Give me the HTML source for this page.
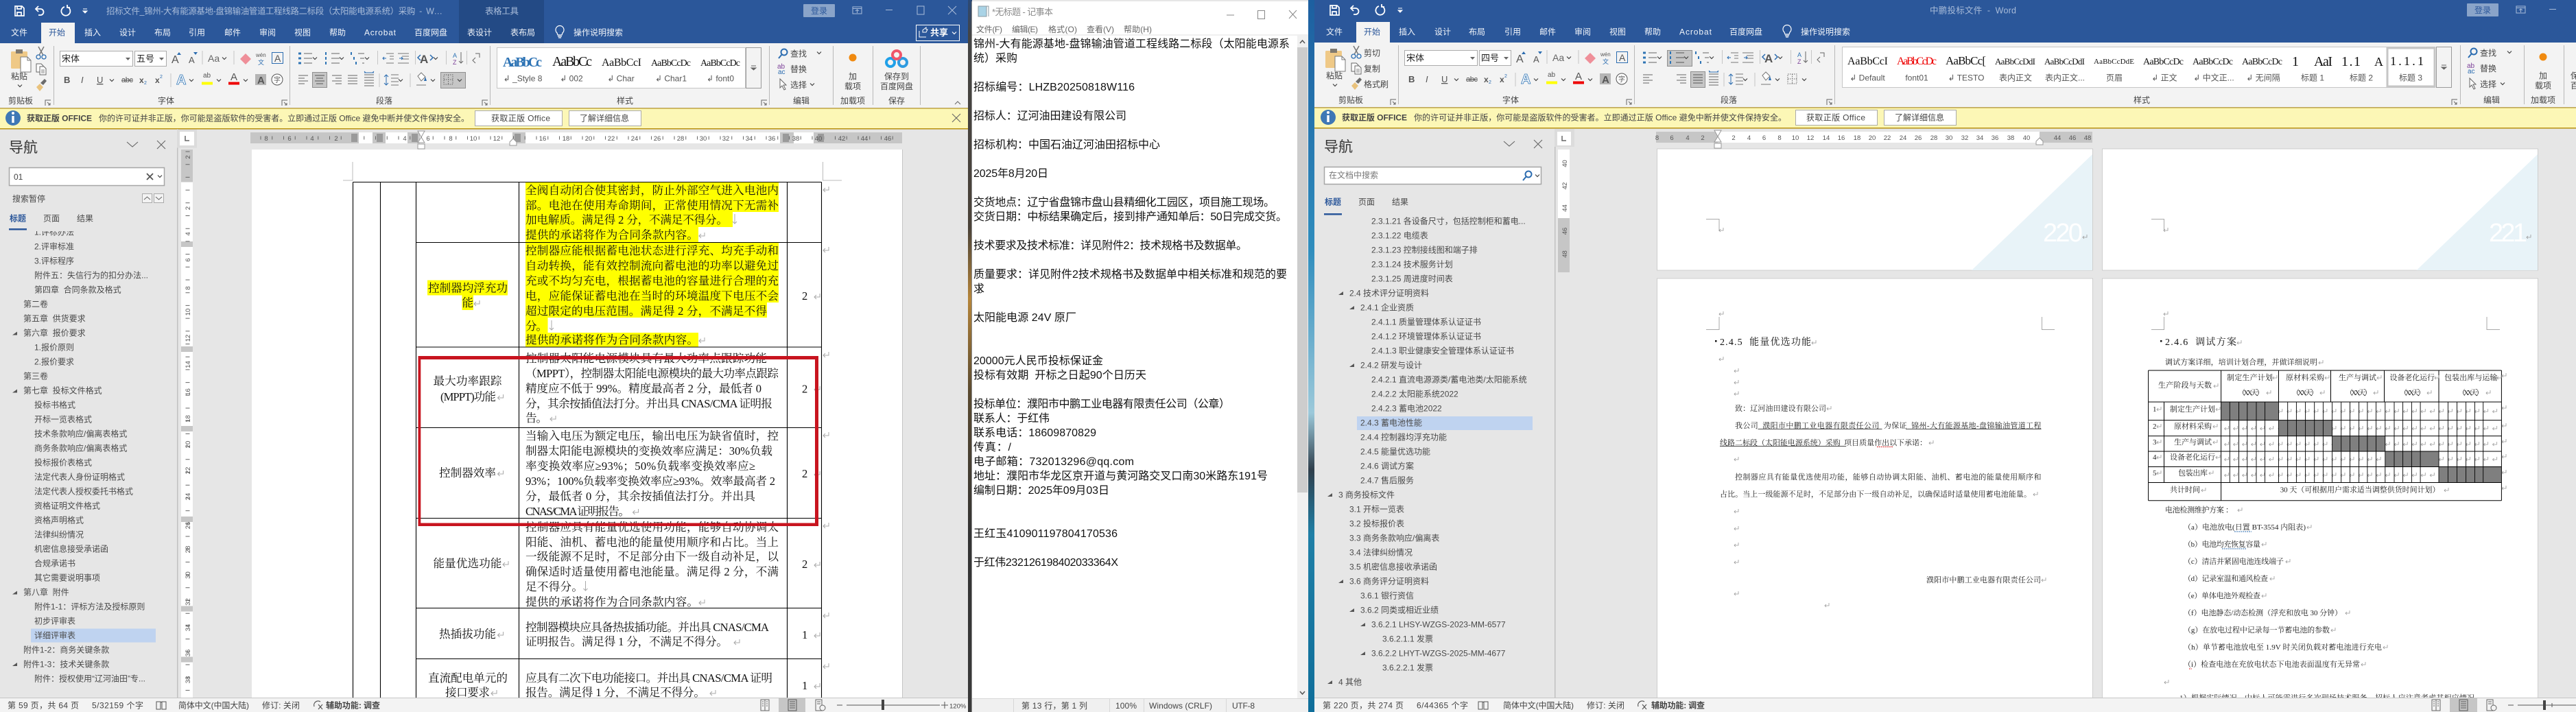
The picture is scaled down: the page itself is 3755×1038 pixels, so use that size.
<!DOCTYPE html>
<html><head><meta charset="utf-8"><title>Word</title>
<style>
html,body{margin:0;padding:0;width:3755px;height:1038px;overflow:hidden;background:#e6e6e6}
svg{display:block;font-family:"Liberation Sans","Noto Sans CJK SC",sans-serif}
text{white-space:pre}
.r{font-size:12px;fill:#444}
.g{font-size:12px;fill:#444}
.w{font-size:12px;fill:#f2f5fa}
.a{font-size:12px;fill:#2b579a}
.ti{font-size:12.5px;fill:#a9bcd9}
.n{font-size:12px;fill:#4a4a4a}
.st{font-size:12px;fill:#444}
.np{font-size:16px;fill:#111}
.s{font-family:"Liberation Serif","Noto Serif CJK SC",serif;font-size:16.6px;fill:#111}
.d{font-family:"Liberation Serif","Noto Serif CJK SC",serif;font-size:11px;fill:#222}
.h{font-family:"Liberation Serif","Noto Serif CJK SC",serif;font-size:14px;fill:#111}
.rl{font-size:9.5px;fill:#555;text-anchor:middle}
.sm{font-family:"Liberation Serif",serif;fill:#111}
.lb{font-size:12px;fill:#555;text-anchor:middle}
</style></head>
<body>
<svg xmlns="http://www.w3.org/2000/svg" width="3755" height="1038" viewBox="0 0 3755 1038">
<defs>
<linearGradient id="wl" x1="0" y1="0" x2="0" y2="1"><stop offset="0" stop-color="#2b4a78"/><stop offset=".05" stop-color="#444"/><stop offset=".32" stop-color="#4a4238"/><stop offset=".42" stop-color="#b5853a"/><stop offset=".55" stop-color="#5a4a30"/><stop offset=".75" stop-color="#333"/><stop offset="1" stop-color="#3a3a3a"/></linearGradient>
<linearGradient id="wr" x1="0" y1="0" x2="0" y2="1"><stop offset="0" stop-color="#1d5fa0"/><stop offset=".35" stop-color="#2f8dbd"/><stop offset=".58" stop-color="#9cc9da"/><stop offset=".66" stop-color="#2f3f4c"/><stop offset=".75" stop-color="#1f7fa6"/><stop offset="1" stop-color="#0f6e9a"/></linearGradient>
<g id="sv" fill="none" stroke="#fff" stroke-width="1.7"><path d="M-6-7H4l3 3V7H-6zM-3-7v4h6v-4M-3 7V2h6v5"/></g>
<g id="un" fill="none" stroke="#fff" stroke-width="1.8"><path d="M-4-3H2a4 4 0 0 1 0 9H-1M-1-7-5-3-1 1"/></g>
<g id="re" fill="none" stroke="#fff" stroke-width="1.8"><path d="M-2-6a6.5 6.5 0 1 0 5 .5M2-9v4h4"/></g>
<g id="qa" fill="none" stroke="#fff"><path d="M-3-3H3"/><path d="M-3 0H3L0 3z" fill="#fff"/></g>
<path id="ch" d="M-3-1.5 0 1.5 3-1.5" fill="none" stroke="#444" stroke-width="1.2"/>
<path id="ln" d="M-4 4V-4H4M-1-1 3 3M3 0V3H0" fill="none" stroke="#666"/>
<g id="paste"><rect y="3" width="24" height="25" rx="1.5" fill="#efc987"/><rect x="7" width="10" height="6" fill="#807a70"/><path d="M14 11H24L29 16V33H14z" fill="#fff" stroke="#7a7a7a"/><path d="M24 11V16H29" fill="none" stroke="#7a7a7a"/></g>
<g id="sc" fill="none"><path d="M-3 3.5 4-9M3 3.5-4-9" stroke="#777" stroke-width="1.5"/><circle cx="-4" cy="6" r="3" stroke="#2b6cb0" stroke-width="1.3"/><circle cx="4" cy="6" r="3" stroke="#2b6cb0" stroke-width="1.3"/></g>
<g id="cp" fill="#fff" stroke="#666"><path d="M-7-7H0L3-4V5H-7z"/><path d="M-2-3H4L7 0V9H-2z"/><path d="M0 2H5M0 4H5M0 6H5" stroke-width=".8"/></g>
<g id="br"><path d="M-7 3-2-2 3 3-2 9z" fill="#e9c27c"/><path d="M-1-3 5-9 8-6 3 0z" fill="#6b6b6b"/></g>
<g id="find" fill="none" stroke="#2b6cb0" stroke-width="2"><circle cx="2" cy="-2" r="4.5"/><path d="M-1 1-6 7"/></g>
<path id="cur" d="M-4-8V5L-1 2 2 8 4 7 1 1H5z" fill="#fff" stroke="#666"/>
<g id="bd"><circle cx="-9" cy="5" r="6" fill="none" stroke="#20a0e8" stroke-width="4"/><circle cx="9" cy="5" r="6" fill="none" stroke="#2f9be0" stroke-width="4"/><circle cy="-6" r="6" fill="none" stroke="#f0556a" stroke-width="4"/></g>
<path id="bulb" d="M-4 3A6 6 0 1 1 4 3L3 6H-3zM-3 8H3M-2 10H2" fill="none" stroke="#fff" stroke-width="1.2"/>
<g id="xx" fill="none" stroke="#666" stroke-width="1.1"><path d="M-6-6 6 6M6-6-6 6"/></g>
<path id="vv" d="M-8-4 0 3 8-4" fill="none" stroke="#666" stroke-width="1.1"/>
<g id="inf"><circle r="11" fill="#3f78b5"/><rect x="-1.7" y="-3" width="3.4" height="10" fill="#fff"/><circle cy="-7" r="2" fill="#fff"/></g>
<path id="ar" d="M-3 3H4V-2z" fill="#555"/>
<path id="pm" d="M4-5V0H-4M-1-3-4 0-1 3" fill="none" stroke="#a8a8a8" stroke-width="1"/>
<path id="dn" d="M0-8V6M-3 3 0 6 3 3" fill="none" stroke="#a8a8a8" stroke-width="1"/>
<path id="ps" d="M3-3V1H-3M-1-1-3 1-1 3" fill="none" stroke="#999" stroke-width=".8"/>
<pattern id="pp" x="3237.6" y="0" width="13.03" height="20" patternUnits="userSpaceOnUse"><path d="M11 7V11H5M7 9 5 11 7 13" fill="none" stroke="#999" stroke-width=".8"/></pattern>
<g id="bk" fill="none" stroke="#555"><path d="M-7-5H-1V6H-7zM1-5H7V6H1zM-1-5 1-4"/></g>
<g id="v1" fill="none" stroke="#666"><path d="M-6-8H6V8H-6zM0-8V8M-4-5H-2M-4-2H-2M-4 1H-2M2-5H4M2-2H4M2 1H4"/></g>
<g id="v2" fill="none" stroke="#555"><path d="M-6-8H6V8H-6zM-4-5H4M-4-2H4M-4 1H4M-4 4H4"/></g>
<g id="v3" fill="none" stroke="#666"><path d="M-6-8H3V8H-6zM-4-5H1M-4-2H1"/><circle cx="4" cy="4" r="4" fill="#f3f3f3"/></g>
<g id="acc" fill="none" stroke="#555" stroke-width="1.2"><path d="M-6 2A6 6 0 0 1 3-5M0-1 6 6M6-1 0 6"/></g>
</defs>

<!-- ============ WORD 1 ============ -->
<rect width="1411" height="63" fill="#2b579a"/>
<rect x="669" width="124" height="63" fill="#234a85"/>
<use href="#sv" x="28" y="16"/><use href="#un" x="57" y="16"/><use href="#re" x="96" y="16"/><use href="#qa" x="124" y="16"/>
<text class="ti" x="155" y="20.5" textLength="490">招标文件_锦州-大有能源基地-盘锦输油管道工程线路二标段（太阳能电源系统）采购  -  W…</text>
<text class="ti" x="707" y="20.5" textLength="49">表格工具</text>
<rect x="1171" y="6" width="46" height="19" rx="1" fill="#8aa4c9"/><text x="1182" y="20" style="font-size:12px;fill:#2b579a">登录</text>
<path d="M1243 10H1256V20H1243zM1243 12.5H1256M1249.5 19V14M1247 16 1249.5 14 1252 16" fill="none" stroke="#a9bcd9"/>
<path d="M1291 14.5H1301" stroke="#a9bcd9"/><rect x="1337" y="9" width="10" height="12" fill="none" stroke="#a9bcd9"/><path d="M1382 9 1394 21M1394 9 1382 21" stroke="#a9bcd9"/>
<rect x="60" y="33" width="49" height="30" fill="#f3f3f3"/>
<text class="w" x="16" y="51.5">文件</text><text class="a" x="71" y="51.5">开始</text><text class="w" x="123" y="51.5">插入</text><text class="w" x="174" y="51.5">设计</text><text class="w" x="225" y="51.5">布局</text><text class="w" x="275" y="51.5">引用</text><text class="w" x="327" y="51.5">邮件</text><text class="w" x="378" y="51.5">审阅</text><text class="w" x="429" y="51.5">视图</text><text class="w" x="480" y="51.5">帮助</text><text class="w" x="531" y="51.5" textLength="46">Acrobat</text><text class="w" x="604" y="51.5">百度网盘</text><text class="w" x="681" y="51.5">表设计</text><text class="w" x="744" y="51.5">表布局</text>
<use href="#bulb" x="816" y="45"/><text class="w" x="836" y="51.5">操作说明搜索</text>
<rect x="1335.5" y="36.5" width="63" height="23" fill="none" stroke="#fff"/><text x="1356" y="52" style="font-size:13px;font-weight:bold;fill:#fff">共享</text><path d="M1345 44 1350 40V43H1352L1350 47H1345zM1340 45V54H1350" fill="none" stroke="#fff"/><path d="M1388 46.5 1391 49.5 1394 46.5" fill="none" stroke="#fff" stroke-width="1.2"/>

<rect y="63" width="1411" height="95" fill="#f3f3f3"/><rect y="157" width="1411" height="1" fill="#c0c0c0"/>
<use href="#paste" x="16" y="72"/><text class="r" x="16" y="115.5">粘贴</text><use href="#ch" x="29" y="125"/>
<use href="#sc" x="60" y="77"/><use href="#cp" x="60" y="100"/><use href="#br" x="60" y="124"/>
<text class="g" x="12" y="151">剪贴板</text><use href="#ln" x="70" y="150"/>
<path d="M78.5 67V153M422.5 67V153M714.5 67V153M1121.5 67V153M1214.5 67V153M1272.5 67V153M1341.5 67V153" stroke="#b8b8b8"/>

<g id="fg">
<rect x="87.5" y="74.5" width="106" height="22" fill="#fff" stroke="#ababab"/>
<rect x="196.5" y="74.5" width="46" height="22" fill="#fff" stroke="#ababab"/>
<path d="M183 84H190L186.5 88zM232 84H239L235.5 88z" fill="#666"/>
<path d="M258 80 261 76 264 80zM282 76 285 80 288 76z" fill="#2b6cb0"/>
<use href="#ch" x="327" y="85"/><use href="#ch" x="163" y="117"/><use href="#ch" x="279" y="117"/><use href="#ch" x="319" y="117"/><use href="#ch" x="358" y="117"/>
<path d="M295 74V94M341 74V94M249 107V127" stroke="#c6c6c6" fill="none"/>
<path d="M350 86 358 78 366 86 358 94z" fill="#ef8f99"/>
<rect x="396.5" y="76.5" width="16" height="16" fill="none" stroke="#2b6cb0"/>
<rect x="294" y="119.5" width="16" height="4" fill="#ffff00"/><rect x="333" y="119.5" width="16" height="4" fill="#ee0000"/>
<rect x="372" y="108" width="16" height="16" fill="#b5b5b5"/>
<circle cx="404" cy="116" r="8" fill="#fff" stroke="#555"/>
<use href="#ch" x="459" y="85"/><use href="#ch" x="498" y="85"/><use href="#ch" x="535" y="85"/><use href="#ch" x="635" y="85"/><use href="#ch" x="584" y="117"/><use href="#ch" x="631" y="117"/>
<path d="M443 78H455M443 85H455M443 92H455M483 78H495M483 85H495M483 92H495M522 78H531M525 85H531M528 92H531" stroke="#666"/>
<path d="M435 78H439M435 85H439M435 92H439" stroke="#2e74b5" stroke-width="3"/>
<path d="M475 76V80M475 83V87M475 90V94M512 76V80M516 83V87M519 90V94" stroke="#2e74b5" stroke-width="2"/>
<path d="M550.5 74V94M605.5 74V94M650.5 74V94M680.5 74V94M553 107V127M598 107V127" stroke="#c6c6c6"/>
<path d="M563 78H574M568 82H574M568 86H574M563 92H574M580 78H596M586 82H596M586 86H596M580 92H596" stroke="#777"/>
<path d="M563 85 558 85M560 83 558 85 560 87M587 85H582M585 83 587 85 585 87" stroke="#2b6cb0" fill="none"/>
<path d="M613 80 609 84 613 88M627 80 631 84 627 88" stroke="#2b6cb0" fill="none" stroke-width="1.5"/>
<path d="M672 76V92M669 89 672 92 675 89M693 78H699V84M693 92 689 88 693 84" stroke="#666" fill="none"/>
<path d="M435 110H449M435 114H444M435 118H449M435 122H444M484 110H498M489 114H498M484 118H498M489 122H498M507 110H521M507 114H521M507 118H521M507 122H521M531 109H545M531 113H545M531 117H545M531 121H545M531 125H545" stroke="#666"/>
<path d="M531 106H545M533 106 531 104M543 106 545 104" stroke="#2b6cb0" fill="none"/>
<path d="M563 109V124M560 112 563 109 566 112M560 121 563 124 566 121" stroke="#2b6cb0" fill="none"/>
<path d="M570 109H581M570 114H581M570 119H581M570 124H581" stroke="#777"/>
<path d="M607 124H621M609 111 614 106 620 112 614 118z" fill="#fff" stroke="#777"/><path d="M620 112 622 118H618z" fill="#2b6cb0"/>
</g>

<text x="90" y="90" style="font-size:13px;fill:#222">宋体</text><text x="199" y="90" style="font-size:13px;fill:#222">五号</text>
<g>
<text x="250" y="92" style="font-size:16px;fill:#555">A</text><text x="275" y="92" style="font-size:13px;fill:#555">A</text><text x="303" y="90" style="font-size:14px;fill:#666">Aa</text>
<text x="373" y="83" style="font-size:8px;fill:#555">wén</text><text x="376" y="94" style="font-size:9px;fill:#2b6cb0">文</text><text x="400" y="90" style="font-size:14px;fill:#555">A</text>
<text x="93" y="121" style="font-size:13px;font-weight:bold;fill:#555">B</text><text x="118" y="121" style="font-size:13px;font-style:italic;fill:#555">I</text><text x="141" y="121" style="font-size:13px;text-decoration:underline;fill:#555">U</text>
<text x="177" y="120" style="font-size:11px;text-decoration:line-through;fill:#555" textLength="17">abc</text><text x="203" y="121" style="font-size:12px;font-weight:bold;fill:#555">x</text><text x="210" y="123" style="font-size:7px;fill:#2b6cb0">2</text><text x="226" y="121" style="font-size:12px;font-weight:bold;fill:#555">x</text><text x="233" y="114" style="font-size:7px;fill:#2b6cb0">2</text>
<text x="257" y="123" style="font-size:20px;font-weight:bold;fill:#fff;stroke:#2e74b5;stroke-width:.8">A</text><text x="296" y="113" style="font-size:10px;fill:#555">ab</text><text x="336" y="117" style="font-size:15px;fill:#555">A</text><text x="375" y="122" style="font-size:15px;font-weight:bold;fill:#555">A</text><text x="399" y="120" style="font-size:10px;fill:#555">字</text>
<text x="612" y="92" style="font-size:17px;font-weight:bold;fill:#555">A</text><text x="660" y="84" style="font-size:9px;fill:#2e74b5">A</text><text x="660" y="94" style="font-size:9px;fill:#7b3f98">Z</text>
</g>
<text class="g" x="230" y="151">字体</text><use href="#ln" x="415" y="150"/>
<rect x="455.5" y="105.5" width="21" height="22" fill="#c6c6c6" stroke="#8f8f8f"/><path d="M459 110H473M461 114H471M459 118H473M461 122H471" stroke="#555"/>
<rect x="642.5" y="105.5" width="36" height="23" fill="#c6c6c6" stroke="#8f8f8f"/><path d="M647 109H660V123H647zM653.5 109V123M647 116H660" fill="none" stroke="#666" stroke-dasharray="1.5 1.5"/><use href="#ch" x="670" y="117"/>
<text class="g" x="548" y="151">段落</text><use href="#ln" x="707" y="150"/>

<rect x="724.5" y="69.5" width="362" height="59" fill="#fff" stroke="#c6c6c6"/><rect x="1087.5" y="69.5" width="22" height="59" fill="#f3f3f3" stroke="#9a9a9a"/>
<path d="M1095 96H1102M1095 99H1102L1098.5 102z" stroke="#666" fill="#666"/>
<g class="sm">
<text x="733" y="97" textLength="57" style="font-size:20px;font-weight:bold;fill:#2e74b5">AaBbCc</text>
<text x="805" y="96" textLength="58" style="font-size:20px">AaBbCc</text>
<text x="877" y="96" textLength="58" style="font-size:16px">AaBbCcI</text>
<text x="949" y="96" textLength="58" style="font-size:14px">AaBbCcDc</text>
<text x="1021" y="96" textLength="58" style="font-size:14px">AaBbCcDc</text>
</g>
<text class="lb" x="762" y="118.5">↲ _Style 8</text><text class="lb" x="833" y="118.5">↲ 002</text><text class="lb" x="905" y="118.5">↲ Char</text><text class="lb" x="978" y="118.5">↲ Char1</text><text class="lb" x="1050" y="118.5">↲ font0</text>
<text class="g" x="899" y="151">样式</text><use href="#ln" x="1114" y="150"/>
<use href="#find" x="1141" y="78"/><text class="r" x="1152" y="82.5">查找</text><use href="#ch" x="1194" y="77"/>
<text x="1133" y="100" style="font-size:10px;fill:#7b3f98">ab</text><text x="1134" y="108" style="font-size:10px;fill:#2b6cb0">ac</text><text class="r" x="1152" y="105">替换</text>
<use href="#cur" x="1141" y="123"/><text class="r" x="1152" y="128">选择</text><use href="#ch" x="1184" y="123"/>
<text class="g" x="1156" y="151">编辑</text>
<circle cx="1243" cy="84" r="5.5" fill="#f08a10"/><text class="lb" x="1243" y="115.5" style="fill:#444">加</text><text class="lb" x="1243" y="130" style="fill:#444">载项</text><text class="g" x="1225" y="151">加载项</text>
<use href="#bd" x="1307" y="86"/><text class="lb" x="1307" y="115.5" style="fill:#444">保存到</text><text class="lb" x="1307" y="130" style="fill:#444">百度网盘</text><text class="g" x="1295" y="151">保存</text>
<path d="M1392 152 1396 148 1400 152" fill="none" stroke="#666"/>

<rect y="158" width="1411" height="30" fill="#fcf7b6"/><rect y="157.5" width="1411" height="1" fill="#b8910f"/><rect y="187" width="1411" height="1.5" fill="#b8910f"/>
<use href="#inf" x="19" y="172"/>
<text x="39" y="176.5" textLength="95" style="font-size:12px;font-weight:bold;fill:#444">获取正版 OFFICE</text>
<text x="144" y="176.5" textLength="540" style="font-size:12px;fill:#444">你的许可证并非正版，你可能是盗版软件的受害者。立即通过正版 Office 避免中断并使文件保持安全。</text>
<rect x="692.5" y="161.5" width="127" height="22" fill="#fff" stroke="#ababab"/><text class="r" x="716" y="176.5" textLength="86">获取正版 Office</text>
<rect x="829.5" y="161.5" width="105" height="22" fill="#fff" stroke="#ababab"/><text class="r" x="845" y="176.5">了解详细信息</text>
<use href="#xx" x="1394" y="172"/>

<rect y="188.5" width="1411" height="829.5" fill="#e6e6e6"/>
<rect x="258" y="188" width="1.5" height="829" fill="#c0c0c0"/>
<!-- horizontal ruler 1 -->
<rect x="365" y="193" width="950" height="16" fill="#c6c6c6"/>
<rect x="523" y="193" width="20" height="16" fill="#fff"/><rect x="562" y="193" width="32" height="16" fill="#fff"/><rect x="612" y="193" width="135" height="16" fill="#fff"/><rect x="766" y="193" width="371" height="16" fill="#fff"/><rect x="1157" y="193" width="29" height="16" fill="#fff"/>
<path d="M379.5 201H1310" stroke="#666" stroke-width="5" stroke-dasharray="1 15.75"/>
<g fill="#9a9a9a"><rect x="512" y="195" width="9" height="12"/><rect x="549" y="195" width="9" height="12"/><rect x="600" y="195" width="9" height="12"/><rect x="750" y="195" width="9" height="12"/><rect x="1141" y="195" width="9" height="12"/><rect x="1192" y="195" width="9" height="12"/></g>
<g class="rl"><text x="388" y="205">8</text><text x="422" y="205">6</text><text x="455" y="205">4</text><text x="490" y="205">2</text><text x="590" y="205">4</text><text x="624" y="205">6</text><text x="657" y="205">8</text><text x="690" y="205">10</text><text x="724" y="205">12</text><text x="791" y="205">16</text><text x="825" y="205">18</text><text x="858" y="205">20</text><text x="891" y="205">22</text><text x="925" y="205">24</text><text x="958" y="205">26</text><text x="992" y="205">28</text><text x="1025" y="205">30</text><text x="1058" y="205">32</text><text x="1092" y="205">34</text><text x="1125" y="205">36</text><text x="1160" y="205">38</text><text x="1193" y="205">40</text><text x="1227" y="205">42</text><text x="1260" y="205">44</text><text x="1294" y="205">46</text></g>
<path d="M609 191H619L614 200zM609 208 614 200 619 208zM609 210H619V217H609z" fill="#fff" stroke="#999"/>
<path d="M743 212V207L748 202 753 207V212z" fill="#fff" stroke="#999"/>
<rect x="258" y="188.5" width="29" height="27" fill="#dcdcdc"/><rect x="262" y="192" width="21" height="20" fill="#fff"/><path d="M270 198V205H276" fill="none" stroke="#666" stroke-width="1.5"/>
<!-- vertical ruler 1 -->
<rect x="264" y="218" width="17" height="799" fill="#fff"/><rect x="264" y="218" width="17" height="47.5" fill="#c6c6c6"/>
<g fill="#c6c6c6"><rect x="264" y="352" width="17" height="8"/><rect x="264" y="505" width="17" height="8"/><rect x="264" y="621" width="17" height="8"/><rect x="264" y="753" width="17" height="8"/><rect x="264" y="883.5" width="17" height="8"/><rect x="264" y="957.5" width="17" height="8"/></g>
<path d="M273.5 220.5V1017" stroke="#666" stroke-width="6" stroke-dasharray="1 17.7"/>
<g class="rl">
<text transform="translate(277,229) rotate(-90)">2</text><text transform="translate(277,303.5) rotate(-90)">2</text><text transform="translate(277,341) rotate(-90)">4</text><text transform="translate(277,379) rotate(-90)">6</text><text transform="translate(277,420) rotate(-90)">8</text><text transform="translate(277,455) rotate(-90)">10</text><text transform="translate(277,493) rotate(-90)">12</text><text transform="translate(277,531.5) rotate(-90)">14</text><text transform="translate(277,571.5) rotate(-90)">16</text><text transform="translate(277,610.5) rotate(-90)">18</text><text transform="translate(277,648) rotate(-90)">20</text><text transform="translate(277,686) rotate(-90)">22</text><text transform="translate(277,724) rotate(-90)">24</text><text transform="translate(277,766) rotate(-90)">26</text><text transform="translate(277,801) rotate(-90)">28</text><text transform="translate(277,838.5) rotate(-90)">30</text><text transform="translate(277,877.5) rotate(-90)">32</text><text transform="translate(277,915) rotate(-90)">34</text><text transform="translate(277,952) rotate(-90)">36</text><text transform="translate(277,991) rotate(-90)">38</text>
</g>
<!-- page 1 -->
<rect x="367" y="218" width="948" height="799" fill="#fff"/><rect x="1315" y="218" width="1" height="799" fill="#c6c6c6"/>
<path d="M514 236V263H500M1199.5 236V263H1227" fill="none" stroke="#bbb"/>
<!-- highlights -->
<g fill="#ffff00">
<rect x="766" y="266" width="369" height="43"/><rect x="766" y="309" width="302" height="22"/><rect x="766" y="331" width="252" height="22"/>
<rect x="766" y="354" width="369" height="87"/><rect x="766" y="441" width="352" height="22"/><rect x="766" y="463" width="32.5" height="22"/><rect x="766" y="485" width="252" height="21"/>
<rect x="623" y="408.5" width="117" height="22"/><rect x="673.5" y="430" width="16.5" height="22"/>
</g>
<!-- table -->
<path d="M514.5 265.5V1017M554.5 265.5V1017M606.5 265.5V1017M756.5 265.5V1017M1147.5 265.5V1017M1197.5 265.5V1017M514.5 265.5H1197.5M606.5 353.5H1197.5M606.5 506H1197.5M606.5 623.5H1197.5M606.5 755.5H1197.5M606.5 886.5H1197.5M606.5 960.5H1197.5" fill="none" stroke="#000" stroke-width="1.1"/>
<g class="s">
<text x="766" y="283" textLength="369">全阀自动闭合使其密封，防止外部空气进入电池内</text>
<text x="766" y="305" textLength="369">部。电池在使用寿命期间，正常使用情况下无需补</text>
<text x="766" y="326" textLength="295">加电解质。满足得 2 分，不满足不得分。</text>
<text x="766" y="348" textLength="252">提供的承诺将作为合同条款内容。</text>
<text x="766" y="371" textLength="369">控制器应能根据蓄电池状态进行浮充、均充手动和</text>
<text x="766" y="393" textLength="369">自动转换，能有效控制流向蓄电池的功率以避免过</text>
<text x="766" y="415" textLength="369">充或不均匀充电，根据蓄电池的容量进行合理的充</text>
<text x="766" y="437" textLength="369">电，应能保证蓄电池在当时的环境温度下电压不会</text>
<text x="766" y="459" textLength="352">超过限定的电压范围。满足得 2 分，不满足不得</text>
<text x="766" y="481" textLength="32">分。</text>
<text x="766" y="501" textLength="252">提供的承诺将作为合同条款内容。</text>
<text x="766" y="528" textLength="352">控制器太阳能电源模块具有最大功率点跟踪功能</text>
<text x="766" y="550" textLength="369">（MPPT），控制器太阳能电源模块的最大功率点跟踪</text>
<text x="766" y="572" textLength="344">精度应不低于 99%。精度最高者 2 分，最低者 0</text>
<text x="766" y="594" textLength="360">分，其余按插值法打分。并出具 CNAS/CMA 证明报</text>
<text x="766" y="615" textLength="32">告。</text>
<text x="766" y="641" textLength="369">当输入电压为额定电压，输出电压为缺省值时，控</text>
<text x="766" y="663" textLength="360">制器太阳能电源模块的变换效率应满足：30%负载</text>
<text x="766" y="685" textLength="335">率变换效率应≥93%；50%负载率变换效率应≥</text>
<text x="766" y="707" textLength="364">93%；100%负载率变换效率应≥93%。效率最高者 2</text>
<text x="766" y="729" textLength="335">分，最低者 0 分，其余按插值法打分。并出具</text>
<text x="766" y="751" textLength="152">CNAS/CMA 证明报告。</text>
<text x="766" y="774" textLength="369">控制器应具有能量优选使用功能，能够自动协调太</text>
<text x="766" y="796" textLength="369">阳能、油机、蓄电池的能量使用顺序和占比。当上</text>
<text x="766" y="817" textLength="369">一级能源不足时，不足部分由下一级自动补足，以</text>
<text x="766" y="839" textLength="369">确保适时适量使用蓄电池能量。满足得 2 分，不满</text>
<text x="766" y="861" textLength="84">足不得分。</text>
<text x="766" y="883" textLength="252">提供的承诺将作为合同条款内容。</text>
<text x="766" y="920" textLength="355">控制器模块应具备热拔插功能。并出具 CNAS/CMA</text>
<text x="766" y="941" textLength="295">证明报告。满足得 1 分，不满足不得分。</text>
<text x="766" y="994" textLength="360">应具有二次下电功能接口。并出具 CNAS/CMA 证明</text>
<text x="766" y="1015" textLength="262">报告。满足得 1 分，不满足不得分。</text>
<text x="624" y="425.5" textLength="116">控制器均浮充功</text><text x="673.5" y="447">能</text>
<text x="631.5" y="561" textLength="100">最大功率跟踪</text><text x="642" y="584" textLength="81">(MPPT)功能</text>
<text x="640" y="695" textLength="83">控制器效率</text><text x="631.5" y="827" textLength="100">能量优选功能</text><text x="640" y="930" textLength="83">热插拔功能</text>
<text x="624" y="994" textLength="116">直流配电单元的</text><text x="649" y="1015" textLength="65">接口要求</text>
<text x="1169" y="437">2</text><text x="1169" y="572.5">2</text><text x="1169" y="696">2</text><text x="1169" y="828">2</text><text x="1169" y="931">1</text><text x="1169" y="1005">1</text>
</g>
<use href="#dn" x="1071" y="320"/><use href="#dn" x="804" y="475"/><use href="#dn" x="853.5" y="855"/>
<use href="#pm" x="1023" y="344"/><use href="#pm" x="695" y="443"/><use href="#pm" x="1023" y="497"/><use href="#pm" x="729.5" y="580"/><use href="#pm" x="806" y="611"/><use href="#pm" x="729.5" y="691"/><use href="#pm" x="926.5" y="747"/><use href="#pm" x="737" y="823"/><use href="#pm" x="1023" y="879"/><use href="#pm" x="729.5" y="926"/><use href="#pm" x="1074" y="937"/><use href="#pm" x="720" y="1011"/><use href="#pm" x="1039" y="1011"/>
<use href="#pm" x="1191" y="433"/><use href="#pm" x="1191" y="568"/><use href="#pm" x="1191" y="692"/><use href="#pm" x="1191" y="824"/><use href="#pm" x="1191" y="927"/><use href="#pm" x="1191" y="1001"/>
<use href="#pm" x="1204" y="277"/><use href="#pm" x="1204" y="365"/><use href="#pm" x="1204" y="518"/><use href="#pm" x="1204" y="635"/><use href="#pm" x="1204" y="767"/><use href="#pm" x="1204" y="898"/><use href="#pm" x="1204" y="972"/>
<!-- red box -->
<g fill="#c8141f"><rect x="609.5" y="519" width="583.5" height="5"/><rect x="609.5" y="762.5" width="583.5" height="4.5"/><rect x="609.5" y="519" width="3.8" height="248"/><rect x="1188" y="519" width="5" height="248"/></g>

<!-- nav 1 -->
<g class="n">
<text x="50" y="342.3">1.评标办法</text><text x="50" y="363.3">2.评审标准</text><text x="50" y="384.3">3.评标程序</text><text x="50" y="405.3">附件五：失信行为的扣分办法...</text><text x="50" y="426.3">第四章  合同条款及格式</text>
<text x="34" y="447.3">第二卷</text><text x="34" y="468.3">第五章  供货要求</text><text x="34" y="489.3">第六章  报价要求</text><text x="50" y="510.3">1.报价原则</text><text x="50" y="531.3">2.报价要求</text><text x="34" y="552.3">第三卷</text><text x="34" y="573.5">第七章  投标文件格式</text>
<text x="50" y="594.5">投标书格式</text><text x="50" y="615.5">开标一览表格式</text><text x="50" y="636.5">技术条款响应/偏离表格式</text><text x="50" y="657.5">商务条款响应/偏离表格式</text><text x="50" y="678.5">投标报价表格式</text><text x="50" y="699.5">法定代表人身份证明格式</text><text x="50" y="720.5">法定代表人授权委托书格式</text><text x="50" y="741.5">资格证明文件格式</text><text x="50" y="762.5">资格声明格式</text><text x="50" y="783.5">法律纠纷情况</text><text x="50" y="804.5">机密信息接受承诺函</text><text x="50" y="825.5">合规承诺书</text><text x="50" y="846.5">其它需要说明事项</text>
<text x="34" y="867.5">第八章  附件</text><text x="50" y="888.5">附件1-1：评标方法及授标原则</text><text x="50" y="909.5">初步评审表</text>
<rect x="45" y="916.5" width="182" height="20" fill="#bfd3f0"/>
<text x="50" y="930.5">详细评审表</text><text x="34" y="951.5">附件1-2：商务关键条款</text><text x="34" y="972.5">附件1-3：技术关键条款</text><text x="50" y="993.5">附件：授权使用“辽河油田”专...</text>
</g>
<use href="#ar" x="21" y="485.5"/><use href="#ar" x="21" y="569.5"/><use href="#ar" x="21" y="863.5"/><use href="#ar" x="21" y="968"/>
<rect y="300" width="258" height="37" fill="#e6e6e6"/>
<text x="13" y="222" style="font-size:21px;fill:#333">导航</text>
<use href="#vv" x="193" y="211"/><use href="#xx" x="235" y="211"/>
<rect x="13.5" y="244.5" width="226" height="26" fill="#fff" stroke="#a6a6a6" stroke-width="1.5"/>
<text x="20" y="262" style="font-size:12px;fill:#444">01</text>
<path d="M214 253 223 262M223 253 214 262" stroke="#555" stroke-width="1.8"/><use href="#ch" x="233" y="257"/>
<text class="n" x="18" y="294">搜索暂停</text>
<rect x="207.5" y="282.5" width="14" height="13" fill="#f3f3f3" stroke="#aaa"/><rect x="224.5" y="282.5" width="14" height="13" fill="#f3f3f3" stroke="#aaa"/><path d="M210 291 214.5 287 219 291M227 287 231.5 291 236 287" fill="none" stroke="#666"/>
<text x="14" y="322.5" style="font-size:12px;font-weight:bold;fill:#2b579a">标题</text><text class="n" x="63" y="322.5">页面</text><text class="n" x="112" y="322.5">结果</text>
<rect x="13" y="333" width="26" height="2.5" fill="#2b579a"/>

<!-- status 1 -->
<rect y="1017" width="1411" height="21" fill="#f3f3f3"/><rect y="1017" width="1411" height="1" fill="#c6c6c6"/>
<g class="st"><text x="11" y="1032.5" textLength="104">第 59 页，共 64 页</text><text x="134" y="1032.5" textLength="75">5/32159 个字</text><text x="260" y="1032.5" textLength="103">简体中文(中国大陆)</text><text x="382" y="1032.5" textLength="55">修订: 关闭</text><text x="475" y="1032.5" textLength="79" style="font-weight:bold">辅助功能: 调查</text></g>
<use href="#bk" x="235" y="1028"/><use href="#acc" x="464" y="1028"/>
<rect x="1135" y="1018" width="39" height="20" fill="#c6c6c6"/><use href="#v1" x="1115" y="1028"/><use href="#v2" x="1155" y="1028"/><use href="#v3" x="1195" y="1028"/>
<path d="M1220 1028H1228M1234 1028H1370M1372 1028H1382M1377 1023V1033" stroke="#555"/><rect x="1285" y="1020" width="4" height="15" fill="#444"/>
<text class="st" x="1384" y="1032.5" style="font-size:9.5px">120%</text>

<!-- strips -->
<rect x="1411" width="6" height="1038" fill="url(#wl)"/>
<rect x="1907" width="10" height="1038" fill="url(#wr)"/>

<!-- ============ NOTEPAD ============ -->
<rect x="1416.5" y="2" width="490.5" height="1036" fill="#fff"/><rect x="1416" y="2" width="1" height="1036" fill="#8a8a8a"/>
<path d="M1426 9H1438V24H1426z" fill="#a9d3e6" stroke="#8a9aa0"/><path d="M1429 9H1441V24" fill="none" stroke="#8a9aa0"/>
<text x="1446" y="22" textLength="89" style="font-size:13px;fill:#8a8a8a">*无标题 - 记事本</text>
<path d="M1788 22H1799" stroke="#888"/><rect x="1833.5" y="15.5" width="10" height="12" fill="none" stroke="#888"/><path d="M1879 15 1890 27M1890 15 1879 27" stroke="#888"/>
<text x="1423" y="47" textLength="38" style="font-size:12px;fill:#666">文件(F)</text><text x="1475" y="47" textLength="38" style="font-size:12px;fill:#666">编辑(E)</text><text x="1528" y="47" textLength="42" style="font-size:12px;fill:#666">格式(O)</text><text x="1584" y="47" textLength="40" style="font-size:12px;fill:#666">查看(V)</text><text x="1638" y="47" textLength="41" style="font-size:12px;fill:#666">帮助(H)</text>
<rect x="1417" y="50" width="490" height="2" fill="#f0f0f0"/>
<rect x="1891" y="52" width="16" height="967" fill="#f0f0f0"/><rect x="1891" y="69" width="15" height="649" fill="#cdcdcd"/>
<path d="M1895 63 1898.5 59 1902 63M1895 1008 1898.5 1012 1902 1008" fill="none" stroke="#555" stroke-width="1.5"/>
<g class="np">
<text x="1419" y="69" textLength="461">锦州-大有能源基地-盘锦输油管道工程线路二标段（太阳能电源系</text>
<text x="1419" y="90" textLength="64">统）采购</text>
<text x="1419" y="132" textLength="235">招标编号：LHZB20250818W116</text>
<text x="1419" y="174" textLength="223">招标人：辽河油田建设有限公司</text>
<text x="1419" y="216" textLength="272">招标机构：中国石油辽河油田招标中心</text>
<text x="1419" y="258" textLength="109">2025年8月20日</text>
<text x="1419" y="300" textLength="439">交货地点：辽宁省盘锦市盘山县精细化工园区，项目施工现场。</text>
<text x="1419" y="321" textLength="457">交货日期：中标结果确定后，接到排产通知单后：50日完成交货。</text>
<text x="1419" y="363" textLength="399">技术要求及技术标准：详见附件2：技术规格书及数据单。</text>
<text x="1419" y="405" textLength="457">质量要求：详见附件2技术规格书及数据单中相关标准和规范的要</text>
<text x="1419" y="426" textLength="23">求。</text>
<text x="1419" y="468" textLength="150">太阳能电源 24V 原厂</text>
<text x="1419" y="531" textLength="189">20000元人民币投标保证金</text>
<text x="1419" y="552" textLength="252">投标有效期  开标之日起90个日历天</text>
<text x="1419" y="594" textLength="374">投标单位：濮阳市中鹏工业电器有限责任公司（公章）</text>
<text x="1419" y="615" textLength="111">联系人：于红伟</text>
<text x="1419" y="636" textLength="179">联系电话：18609870829</text>
<text x="1419" y="657" textLength="55">传真：/</text>
<text x="1419" y="678" textLength="234">电子邮箱：732013296@qq.com</text>
<text x="1419" y="699" textLength="429">地址：濮阳市华龙区京开道与黄河路交叉口南30米路东191号</text>
<text x="1419" y="720" textLength="198">编制日期：2025年09月03日</text>
<text x="1419" y="783" textLength="210">王红玉410901197804170536</text>
<text x="1419" y="825" textLength="211">于红伟232126198402033364X</text>
</g>
<rect x="1417" y="1019" width="490" height="19" fill="#f0f0f0"/><path d="M1417 1018.5H1907M1477.5 1019V1038M1617.5 1019V1038M1667.5 1019V1038M1787.5 1019V1038" stroke="#d7d7d7"/>
<g style="font-size:12px;fill:#444"><text x="1489" y="1033" textLength="96">第 13 行，第 1 列</text><text x="1626" y="1033" textLength="31">100%</text><text x="1675" y="1033" textLength="92">Windows (CRLF)</text><text x="1796" y="1033" textLength="33">UTF-8</text></g>

<!-- ============ WORD 2 ============ -->
<rect x="1916" width="1839" height="62" fill="#2b579a"/>
<use href="#sv" x="1945" y="15"/><use href="#un" x="1974" y="15"/><use href="#re" x="2012" y="15"/><use href="#qa" x="2041" y="15"/>
<text class="ti" x="2813" y="19.5" textLength="126">中鹏投标文件  -  Word</text>
<rect x="3596" y="5" width="46" height="19" rx="1" fill="#8aa4c9"/><text x="3607" y="19" style="font-size:12px;fill:#2b579a">登录</text>
<path d="M3668 9H3681V19H3668zM3668 11.5H3681M3674.5 18V13M3672 15 3674.5 13 3677 15" fill="none" stroke="#a9bcd9"/><path d="M3716 13.5H3726" stroke="#a9bcd9"/>
<rect x="1977" y="32" width="49" height="30" fill="#f3f3f3"/>
<text class="w" x="1933" y="50.5">文件</text><text class="a" x="1988" y="50.5">开始</text><text class="w" x="2039" y="50.5">插入</text><text class="w" x="2091" y="50.5">设计</text><text class="w" x="2141" y="50.5">布局</text><text class="w" x="2193" y="50.5">引用</text><text class="w" x="2244" y="50.5">邮件</text><text class="w" x="2295" y="50.5">审阅</text><text class="w" x="2346" y="50.5">视图</text><text class="w" x="2397" y="50.5">帮助</text><text class="w" x="2448" y="50.5" textLength="47">Acrobat</text><text class="w" x="2521" y="50.5">百度网盘</text>
<use href="#bulb" x="2605" y="44"/><text class="w" x="2625" y="50.5">操作说明搜索</text>

<rect x="1916" y="62" width="1839" height="95" fill="#f3f3f3"/><rect x="1916" y="156" width="1839" height="1" fill="#c0c0c0"/>
<use href="#paste" x="1932" y="71"/><text class="r" x="1933" y="114.5">粘贴</text><use href="#ch" x="1946" y="124"/>
<use href="#sc" x="1977" y="76"/><text class="r" x="1988" y="81.5">剪切</text><use href="#cp" x="1977" y="99"/><text class="r" x="1988" y="104.5">复制</text><use href="#br" x="1977" y="122"/><text class="r" x="1988" y="127">格式刷</text>
<text class="g" x="1951" y="150">剪贴板</text><use href="#ln" x="2031" y="149"/>
<path d="M2038.5 66V152M2382.5 66V152M2674.5 66V152M3586.5 66V152M3679.5 66V152M3737.5 66V152" stroke="#b8b8b8"/>
<use href="#fg" x="1960" y="-1"/>
<text x="2050" y="89" style="font-size:13px;fill:#222">宋体</text><text x="2159" y="89" style="font-size:13px;fill:#222">四号</text>
<g transform="translate(1960,-1)">
<text x="250" y="92" style="font-size:16px;fill:#555">A</text><text x="275" y="92" style="font-size:13px;fill:#555">A</text><text x="303" y="90" style="font-size:14px;fill:#666">Aa</text>
<text x="373" y="83" style="font-size:8px;fill:#555">wén</text><text x="376" y="94" style="font-size:9px;fill:#2b6cb0">文</text><text x="400" y="90" style="font-size:14px;fill:#555">A</text>
<text x="93" y="121" style="font-size:13px;font-weight:bold;fill:#555">B</text><text x="118" y="121" style="font-size:13px;font-style:italic;fill:#555">I</text><text x="141" y="121" style="font-size:13px;text-decoration:underline;fill:#555">U</text>
<text x="177" y="120" style="font-size:11px;text-decoration:line-through;fill:#555" textLength="17">abc</text><text x="203" y="121" style="font-size:12px;font-weight:bold;fill:#555">x</text><text x="210" y="123" style="font-size:7px;fill:#2b6cb0">2</text><text x="226" y="121" style="font-size:12px;font-weight:bold;fill:#555">x</text><text x="233" y="114" style="font-size:7px;fill:#2b6cb0">2</text>
<text x="257" y="123" style="font-size:20px;font-weight:bold;fill:#fff;stroke:#2e74b5;stroke-width:.8">A</text><text x="296" y="113" style="font-size:10px;fill:#555">ab</text><text x="336" y="117" style="font-size:15px;fill:#555">A</text><text x="375" y="122" style="font-size:15px;font-weight:bold;fill:#555">A</text><text x="399" y="120" style="font-size:10px;fill:#555">字</text>
<text x="612" y="92" style="font-size:17px;font-weight:bold;fill:#555">A</text><text x="660" y="84" style="font-size:9px;fill:#2e74b5">A</text><text x="660" y="94" style="font-size:9px;fill:#7b3f98">Z</text>
</g>
<text class="g" x="2190" y="150">字体</text><use href="#ln" x="2375" y="149"/>
<rect x="2430.5" y="73.5" width="36" height="23" fill="#c6c6c6" stroke="#8f8f8f"/><path d="M2443 77H2455M2443 84H2455M2443 91H2455" stroke="#555"/><path d="M2435 75V79M2435 82V86M2435 89V93" stroke="#2e74b5" stroke-width="2"/><use href="#ch" x="2458" y="84"/>
<rect x="2464.5" y="104.5" width="21" height="23" fill="#c6c6c6" stroke="#8f8f8f"/><path d="M2468 109H2482M2468 113H2482M2468 117H2482M2468 121H2482" stroke="#555"/>
<path d="M2606 108H2619V122H2606zM2612.5 108V122M2606 115H2619" fill="none" stroke="#666" stroke-dasharray="1.5 1.5"/><use href="#ch" x="2630" y="116"/>
<text class="g" x="2508" y="150">段落</text><use href="#ln" x="2667" y="149"/>
<rect x="2685.5" y="68.5" width="864" height="59" fill="#fff" stroke="#c6c6c6"/><rect x="3551.5" y="68.5" width="22" height="59" fill="#f3f3f3" stroke="#9a9a9a"/>
<path d="M3559 95H3566M3559 98H3566L3562.5 101z" stroke="#666" fill="#666"/>
<rect x="3480" y="70" width="69" height="56" fill="#fff" stroke="#c6c6c6" stroke-width="3"/>
<g class="sm">
<text x="2693" y="94" textLength="59" style="font-size:16px">AaBbCcI</text>
<text x="2765" y="94" textLength="58" style="font-size:16px;fill:#ee0000">AaBbCcDc</text>
<text x="2836" y="94" textLength="59" style="font-size:17px">AaBbCc[</text>
<text x="2908" y="94" textLength="59" style="font-size:13px">AaBbCcDdI</text>
<text x="2980" y="94" textLength="59" style="font-size:13px">AaBbCcDdI</text>
<text x="3052" y="93" textLength="59" style="font-size:11px">AaBbCcDdE</text>
<text x="3124" y="94" textLength="59" style="font-size:14px">AaBbCcDc</text>
<text x="3196" y="94" textLength="59" style="font-size:14px">AaBbCcDc</text>
<text x="3268" y="94" textLength="59" style="font-size:14px">AaBbCcDc</text>
<text x="3341" y="96" style="font-size:20px">1</text><text x="3373" y="96" textLength="27" style="font-size:20px">AaI</text>
<text x="3413" y="96" textLength="28" style="font-size:20px">1.1</text><text x="3461" y="96" style="font-size:18px">A</text>
<text x="3484" y="95" textLength="49" style="font-size:18px">1.1.1</text>
</g>
<text class="lb" x="2722" y="117.5">↲ Default</text><text class="lb" x="2794" y="117.5">font01</text><text class="lb" x="2866" y="117.5">↲ TESTO</text><text class="lb" x="2938" y="117.5">表内正文</text><text class="lb" x="3010" y="117.5">表内正文...</text><text class="lb" x="3082" y="117.5">页眉</text><text class="lb" x="3155" y="117.5">↲ 正文</text><text class="lb" x="3227" y="117.5">↲ 中文正...</text><text class="lb" x="3299" y="117.5">↲ 无间隔</text><text class="lb" x="3371" y="117.5">标题 1</text><text class="lb" x="3442" y="117.5">标题 2</text><text class="lb" x="3514" y="117.5">标题 3</text>
<text class="g" x="3110" y="150">样式</text><use href="#ln" x="3578" y="149"/>
<use href="#find" x="3604" y="77"/><text class="r" x="3615" y="81.5">查找</text><use href="#ch" x="3658" y="76"/>
<text x="3596" y="99" style="font-size:10px;fill:#7b3f98">ab</text><text x="3597" y="107" style="font-size:10px;fill:#2b6cb0">ac</text><text class="r" x="3615" y="104">替换</text>
<use href="#cur" x="3604" y="122"/><text class="r" x="3615" y="127">选择</text><use href="#ch" x="3648" y="122"/>
<text class="g" x="3620" y="150">编辑</text>
<circle cx="3707" cy="83" r="5.5" fill="#f08a10"/><text class="lb" x="3707" y="114.5" style="fill:#444">加</text><text class="lb" x="3707" y="129" style="fill:#444">载项</text><text class="g" x="3689" y="150">加载项</text>
<text class="r" x="3747" y="114.5">保</text><text class="r" x="3747" y="129">百</text>

<rect x="1916" y="157" width="1839" height="30" fill="#fcf7b6"/><rect x="1916" y="156.5" width="1839" height="1" fill="#b8910f"/><rect x="1916" y="186" width="1839" height="1.5" fill="#b8910f"/>
<use href="#inf" x="1936" y="171"/>
<text x="1956" y="175.5" textLength="95" style="font-size:12px;font-weight:bold;fill:#444">获取正版 OFFICE</text>
<text x="2061" y="175.5" textLength="543" style="font-size:12px;fill:#444">你的许可证并非正版，你可能是盗版软件的受害者。立即通过正版 Office 避免中断并使文件保持安全。</text>
<rect x="2617.5" y="160.5" width="119" height="22" fill="#fff" stroke="#ababab"/><text class="r" x="2633" y="175.5" textLength="86">获取正版 Office</text>
<rect x="2746.5" y="160.5" width="105" height="22" fill="#fff" stroke="#ababab"/><text class="r" x="2762" y="175.5">了解详细信息</text>

<rect x="1916" y="187.5" width="1839" height="830.5" fill="#e6e6e6"/>
<rect x="2266" y="188" width="1.5" height="829" fill="#c0c0c0"/>
<rect x="2265" y="188" width="30" height="26" fill="#dcdcdc"/><rect x="2270" y="192" width="20" height="20" fill="#fff"/><path d="M2277 198V205H2283" fill="none" stroke="#666" stroke-width="1.5"/>
<rect x="2271" y="218" width="17" height="100" fill="#fff"/><rect x="2271" y="318" width="17" height="79" fill="#c6c6c6"/>
<g class="rl"><text transform="translate(2284,238.5) rotate(-90)">40</text><text transform="translate(2284,271) rotate(-90)">42</text><text transform="translate(2284,303.5) rotate(-90)">44</text><text transform="translate(2284,337) rotate(-90)">46</text><text transform="translate(2284,370.5) rotate(-90)">48</text></g>
<!-- ruler 2 -->
<rect x="2414" y="192" width="636" height="16" fill="#fff"/><rect x="2414" y="192" width="90" height="16" fill="#c6c6c6"/><rect x="2973" y="192" width="77" height="16" fill="#c6c6c6"/>
<g class="rl"><text x="2415.5" y="204">8</text><text x="2437" y="204">6</text><text x="2460" y="204">4</text><text x="2482" y="204">2</text><text x="2527" y="204">2</text><text x="2549.5" y="204">4</text><text x="2571.5" y="204">6</text><text x="2594" y="204">8</text><text x="2617" y="204">10</text><text x="2639" y="204">12</text><text x="2662" y="204">14</text><text x="2684" y="204">16</text><text x="2707" y="204">18</text><text x="2729" y="204">20</text><text x="2751" y="204">22</text><text x="2774" y="204">24</text><text x="2796" y="204">26</text><text x="2819" y="204">28</text><text x="2841" y="204">30</text><text x="2864" y="204">32</text><text x="2886" y="204">34</text><text x="2908" y="204">36</text><text x="2931" y="204">38</text><text x="2954" y="204">40</text><text x="2999" y="204">44</text><text x="3021" y="204">46</text><text x="3043" y="204">48</text></g>
<path d="M2499 190H2509L2504 199zM2499 207 2504 199 2509 207zM2499 209H2509V216H2499z" fill="#fff" stroke="#999"/>
<path d="M2968 211V206L2973 201 2978 206V211z" fill="#fff" stroke="#999"/>
<!-- pages row 1 -->
<rect x="2415.5" y="217" width="635" height="177" fill="#fff" stroke="#c6c6c6" stroke-width=".8"/><rect x="3064.5" y="217" width="635" height="177" fill="#fff" stroke="#c6c6c6" stroke-width=".8"/>
<path d="M3050 225V394H2874z" fill="#e8f3f8"/><path d="M3699 225V394H3522.5z" fill="#e8f3f8"/>
<text x="2978" y="352" textLength="58" style="font-size:38px;fill:#fff">220</text><text x="3628" y="352" textLength="56" style="font-size:38px;fill:#fff">221</text>
<path d="M2487 319.5H2506V337M3136 319.5H3154.5V337" fill="none" stroke="#aaa"/>
<use href="#ps" x="2509" y="335"/><use href="#ps" x="3157" y="335"/><use href="#ps" x="3039" y="345"/><use href="#ps" x="3686" y="345"/>
<!-- pages row 2 -->
<rect x="2415.5" y="406" width="635" height="612" fill="#fff" stroke="#c6c6c6" stroke-width=".8"/><rect x="3064.5" y="406" width="635" height="612" fill="#fff" stroke="#c6c6c6" stroke-width=".8"/>
<path d="M2487 480.5H2506V462M2976.5 462V480.5H2995M3136 480.5H3154.5V462M3625 462V480.5H3644" fill="none" stroke="#aaa"/>
<g>
<use href="#ps" x="2509" y="457"/><use href="#ps" x="3157" y="457"/>
<rect x="2500" y="496" width="2.5" height="2.5" fill="#111"/><rect x="3149" y="496" width="2.5" height="2.5" fill="#111"/>
<text class="h" x="2507" y="503" textLength="133">2.4.5  能量优选功能</text>
<text class="h" x="3156" y="503" textLength="104">2.4.6  调试方案</text>
<use href="#ps" x="2644" y="499"/><use href="#ps" x="3264" y="499"/>
<use href="#ps" x="2509" y="523"/><use href="#ps" x="2531" y="540"/><use href="#ps" x="2531" y="557"/><use href="#ps" x="2531" y="573.5"/>
</g>
<g class="d">
<text x="2529" y="599" textLength="133">致：辽河油田建设有限公司</text>
<text x="2529" y="624" textLength="446.5">我公司  濮阳市中鹏工业电器有限责任公司  为保证  锦州-大有能源基地-盘锦输油管道工程</text>
<text x="2507" y="649" textLength="302">线路二标段（太阳能电源系统）采购  项目质量作出以下承诺：</text>
<text x="2529" y="699" textLength="446.5">控制器应具有能量优选使用功能，能够自动协调太阳能、油机、蓄电池的能量使用顺序和</text>
<text x="2507" y="724" textLength="454">占比。当上一级能源不足时，不足部分由下一级自动补足，以确保适时适量使用蓄电池能量。</text>
<text x="2808" y="849" textLength="167">濮阳市中鹏工业电器有限责任公司</text>
</g>
<path d="M2562.5 625.5H2743.5M2778 625.5H2975.5M2507 650.5H2691" stroke="#111" stroke-width=".8"/><path d="M2736 651.5H2759.5" stroke="#d22" stroke-width="1" stroke-dasharray="2 1"/>
<use href="#ps" x="2666" y="595"/><use href="#ps" x="2815" y="645"/><use href="#ps" x="2531" y="669"/><use href="#ps" x="2967" y="720"/><use href="#ps" x="2531" y="745"/><use href="#ps" x="2531" y="770"/><use href="#ps" x="2531" y="794"/><use href="#ps" x="2531" y="819"/><use href="#ps" x="2979" y="845"/><use href="#ps" x="2531" y="865"/><use href="#ps" x="2663" y="882"/>
<!-- right page table -->
<text class="d" x="3156" y="531.5" textLength="222">调试方案详细，培训计划合理，并做详细说明</text><use href="#ps" x="3383" y="528"/>
<g fill="#7f7f7f"><rect x="3237.6" y="586" width="84" height="26.6"/><rect x="3321.5" y="612.6" width="78" height="23"/><rect x="3399.5" y="635.6" width="77" height="22.4"/><rect x="3476.5" y="658" width="78.5" height="22.5"/><rect x="3555" y="680.5" width="91.4" height="23"/></g>
<rect x="3321.5" y="0" width="324.9" height="20" fill="url(#pp)" transform="translate(0,589)"/>
<rect x="3237.6" y="0" width="84" height="20" fill="url(#pp)" transform="translate(0,614)"/><rect x="3399.5" y="0" width="247" height="20" fill="url(#pp)" transform="translate(0,614)"/>
<rect x="3237.6" y="0" width="161.9" height="20" fill="url(#pp)" transform="translate(0,637)"/><rect x="3476.5" y="0" width="170" height="20" fill="url(#pp)" transform="translate(0,637)"/>
<rect x="3237.6" y="0" width="238.9" height="20" fill="url(#pp)" transform="translate(0,659)"/><rect x="3555" y="0" width="91.4" height="20" fill="url(#pp)" transform="translate(0,659)"/>
<rect x="3237.6" y="0" width="317.4" height="20" fill="url(#pp)" transform="translate(0,682)"/>
<path d="M3131.6 540H3646.4M3131.6 586H3646.4M3131.6 612.6H3646.4M3131.6 635.6H3646.4M3131.6 658H3646.4M3131.6 680.5H3646.4M3131.6 703.5H3646.4M3131.6 729.7H3646.4M3131.6 540V729.7M3154.5 586V703.5M3237.6 540V729.7M3321.5 540V586M3397.5 540V586M3475.5 540V586M3555 540V586M3646.4 540V729.7" fill="none" stroke="#000" stroke-width="1"/>
<path d="M3250.3 586V703.5M3263.5 586V703.5M3275.8 586V703.5M3289 586V703.5M3301.6 586V703.5M3321.5 586V703.5M3334.7 586V703.5M3347.4 586V703.5M3360.6 586V703.5M3373.7 586V703.5M3386.4 586V703.5M3399.6 586V703.5M3412.7 586V703.5M3425.5 586V703.5M3438.6 586V703.5M3450.9 586V703.5M3463.6 586V703.5M3476.8 586V703.5M3490 586V703.5M3502.6 586V703.5M3515.4 586V703.5M3528.1 586V703.5M3555 586V703.5M3568.4 586V703.5M3581.5 586V703.5M3594.6 586V703.5M3607.4 586V703.5M3619.7 586V703.5" stroke="#000" stroke-width=".9"/>
<g class="d">
<text x="3146" y="565" textLength="78">生产阶段与天数</text>
<text x="3246" y="554" textLength="67">制定生产计划</text><text x="3262" y="576" textLength="38">（XX 天）</text>
<text x="3332" y="554" textLength="56">原材料采购</text><text x="3341" y="576" textLength="38">（XX 天）</text>
<text x="3409" y="554" textLength="55">生产与调试</text><text x="3419" y="576" textLength="38">（XX 天）</text>
<text x="3483.5" y="554" textLength="65.5">设备老化运行</text><text x="3498" y="576" textLength="37">（XX 天）</text>
<text x="3563" y="554" textLength="77.5">包装出库与运输</text><text x="3583" y="576" textLength="37">（XX 天）</text>
<text x="3138" y="600">1</text><text x="3163" y="600" textLength="66">制定生产计划</text>
<text x="3138" y="625">2</text><text x="3169" y="625" textLength="55">原材料采购</text>
<text x="3138" y="648">3</text><text x="3169" y="648" textLength="55">生产与调试</text>
<text x="3138" y="670">4</text><text x="3163" y="670" textLength="66">设备老化运行</text>
<text x="3138" y="693">5</text><text x="3175" y="693" textLength="43">包装出库</text>
<text x="3163" y="717.5" textLength="44">共计时间</text>
<text x="3323.7" y="717.5" textLength="232.8">30 天（可根据用户需求适当调整供货时间计划）</text>
<text x="3156" y="747" textLength="99">电池检测维护方案 ：</text>
<text x="3183" y="772" textLength="178">（a）电池放电(日置 BT-3554 内阻表)</text>
<text x="3183" y="797" textLength="112">（b）电池均充恢复容量</text>
<text x="3183" y="822" textLength="146">（c）清洁并紧固电池连线端子</text>
<text x="3183" y="847" textLength="123">（d）记录室温和通风检查</text>
<text x="3183" y="872" textLength="112">（e）单体电池外观检查</text>
<text x="3183" y="897" textLength="231">（f）电池静态/动态检测（浮充和放电 30 分钟）</text>
<text x="3183" y="922" textLength="213">（g）在放电过程中记录每一节蓄电池的参数</text>
<text x="3183" y="947" textLength="289">（h）单节蓄电池放电至 1.9V 时关闭负载对蓄电池进行充电</text>
<text x="3183" y="972" textLength="257">（i）检查电池在充放电状态下电池表面温度有无异常</text>
<text x="3177" y="1021" textLength="430">1）根据实际情况，中标人可能需进行多次现场技术服务，招标人应注意考虑其相应情况</text>
</g>
<path d="M3257 775H3282M3239 800H3274" stroke="#2b6cb0" stroke-width="1" stroke-dasharray="2 1"/><path d="M3191 975H3195" stroke="#d22" stroke-dasharray="2 1"/>
<use href="#ps" x="3650" y="547"/><use href="#ps" x="3650" y="594"/><use href="#ps" x="3650" y="620"/><use href="#ps" x="3650" y="643"/><use href="#ps" x="3650" y="665"/><use href="#ps" x="3650" y="688"/><use href="#ps" x="3650" y="711"/>
<use href="#ps" x="3230" y="562"/><use href="#ps" x="3316" y="550"/><use href="#ps" x="3307" y="572"/><use href="#ps" x="3392" y="550"/><use href="#ps" x="3385" y="572"/><use href="#ps" x="3468" y="550"/><use href="#ps" x="3463" y="572"/><use href="#ps" x="3552" y="550"/><use href="#ps" x="3541" y="572"/><use href="#ps" x="3643" y="550"/><use href="#ps" x="3627" y="572"/>
<use href="#ps" x="3147" y="596"/><use href="#ps" x="3233" y="596"/><use href="#ps" x="3147" y="621"/><use href="#ps" x="3229" y="621"/><use href="#ps" x="3147" y="644"/><use href="#ps" x="3229" y="644"/><use href="#ps" x="3147" y="666"/><use href="#ps" x="3233" y="666"/><use href="#ps" x="3147" y="689"/><use href="#ps" x="3223" y="689"/><use href="#ps" x="3212" y="714"/><use href="#ps" x="3566" y="714"/>
<use href="#ps" x="3265" y="743"/><use href="#ps" x="3366" y="768"/><use href="#ps" x="3300" y="793"/><use href="#ps" x="3335" y="818"/><use href="#ps" x="3312" y="843"/><use href="#ps" x="3300" y="868"/><use href="#ps" x="3422" y="893"/><use href="#ps" x="3401" y="918"/><use href="#ps" x="3477" y="943"/><use href="#ps" x="3445" y="968"/><use href="#ps" x="3158" y="994"/>

<!-- nav 2 -->
<rect x="1917" y="188" width="349" height="829" fill="#e6e6e6"/>
<g class="n">
<text x="1999" y="326.5">2.3.1.21 各设备尺寸，包括控制柜和蓄电...</text><text x="1999" y="347.5">2.3.1.22 电缆表</text><text x="1999" y="368.5">2.3.1.23 控制接线图和端子排</text><text x="1999" y="389.5">2.3.1.24 技术服务计划</text><text x="1999" y="410.5">2.3.1.25 周进度时间表</text>
<text x="1967" y="431.5">2.4 技术评分证明资料</text><text x="1983" y="452.5">2.4.1 企业资质</text><text x="1999" y="473.5">2.4.1.1 质量管理体系认证证书</text><text x="1999" y="494.5">2.4.1.2 环境管理体系认证证书</text><text x="1999" y="515.5">2.4.1.3 职业健康安全管理体系认证证书</text>
<text x="1983" y="536.5">2.4.2 研发与设计</text><text x="1999" y="557.5">2.4.2.1 直流电源源类/蓄电池类/太阳能系统</text><text x="1999" y="578.5">2.4.2.2 太阳能系统2022</text><text x="1999" y="599.5">2.4.2.3 蓄电池2022</text>
<rect x="1978" y="607" width="256" height="20" fill="#bfd3f0"/>
<text x="1983" y="620.5">2.4.3 蓄电池性能</text><text x="1983" y="641.5">2.4.4 控制器均浮充功能</text><text x="1983" y="662.5">2.4.5 能量优选功能</text><text x="1983" y="683.5">2.4.6 调试方案</text><text x="1983" y="704.5">2.4.7 售后服务</text>
<text x="1951" y="725.5">3 商务投标文件</text><text x="1967" y="746.5">3.1 开标一览表</text><text x="1967" y="767.5">3.2 投标报价表</text><text x="1967" y="788.5">3.3 商务条款响应/偏离表</text><text x="1967" y="809.5">3.4 法律纠纷情况</text><text x="1967" y="830.5">3.5 机密信息接收承诺函</text><text x="1967" y="851.5">3.6 商务评分证明资料</text><text x="1983" y="872.5">3.6.1 银行资信</text><text x="1983" y="893.5">3.6.2 同类或相近业绩</text>
<text x="1999" y="914.5">3.6.2.1 LHSY-WZGS-2023-MM-6577</text><text x="2015" y="935.5">3.6.2.1.1 发票</text><text x="1999" y="956.5">3.6.2.2 LHYT-WZGS-2025-MM-4677</text><text x="2015" y="977.5">3.6.2.2.1 发票</text><text x="1951" y="998.5">4 其他</text>
</g>
<use href="#ar" x="1954" y="427"/><use href="#ar" x="1970" y="448"/><use href="#ar" x="1970" y="532"/><use href="#ar" x="1938" y="721"/><use href="#ar" x="1954" y="847"/><use href="#ar" x="1970" y="889"/><use href="#ar" x="1986" y="910"/><use href="#ar" x="1986" y="952"/><use href="#ar" x="1938" y="994"/>
<text x="1930" y="221" style="font-size:21px;fill:#333">导航</text>
<use href="#vv" x="2200" y="210"/><use href="#xx" x="2242" y="210"/>
<rect x="1930.5" y="243.5" width="316" height="25" fill="#fff" stroke="#a6a6a6" stroke-width="1.5"/>
<text x="1937" y="259.5" style="font-size:12px;fill:#777">在文档中搜索</text>
<use href="#find" x="2226" y="256"/><use href="#ch" x="2241" y="256"/>
<text x="1931" y="298.5" style="font-size:12px;font-weight:bold;fill:#2b579a">标题</text><text class="n" x="1980" y="298.5">页面</text><text class="n" x="2029" y="298.5">结果</text>
<rect x="1930" y="311" width="26" height="2.5" fill="#2b579a"/>

<!-- status 2 -->
<rect x="1916" y="1018" width="1839" height="20" fill="#f3f3f3"/><rect x="1916" y="1017" width="1839" height="1" fill="#c6c6c6"/>
<g class="st"><text x="1928" y="1032.5" textLength="118">第 220 页，共 274 页</text><text x="2065" y="1032.5" textLength="75">6/44365 个字</text><text x="2191" y="1032.5" textLength="103">简体中文(中国大陆)</text><text x="2313" y="1032.5" textLength="55">修订: 关闭</text><text x="2407" y="1032.5" textLength="78" style="font-weight:bold">辅助功能: 调查</text></g>
<use href="#bk" x="2162" y="1028"/><use href="#acc" x="2394" y="1028"/>
<rect x="3571" y="1018" width="40" height="20" fill="#c6c6c6"/><use href="#v1" x="3551" y="1028"/><use href="#v2" x="3591" y="1028"/><use href="#v3" x="3631" y="1028"/>
<path d="M3656 1028H3664M3670 1028H3755M3720 1025V1031" stroke="#555"/><rect x="3707" y="1021" width="4" height="14" fill="#444"/>
</svg>
</body></html>
